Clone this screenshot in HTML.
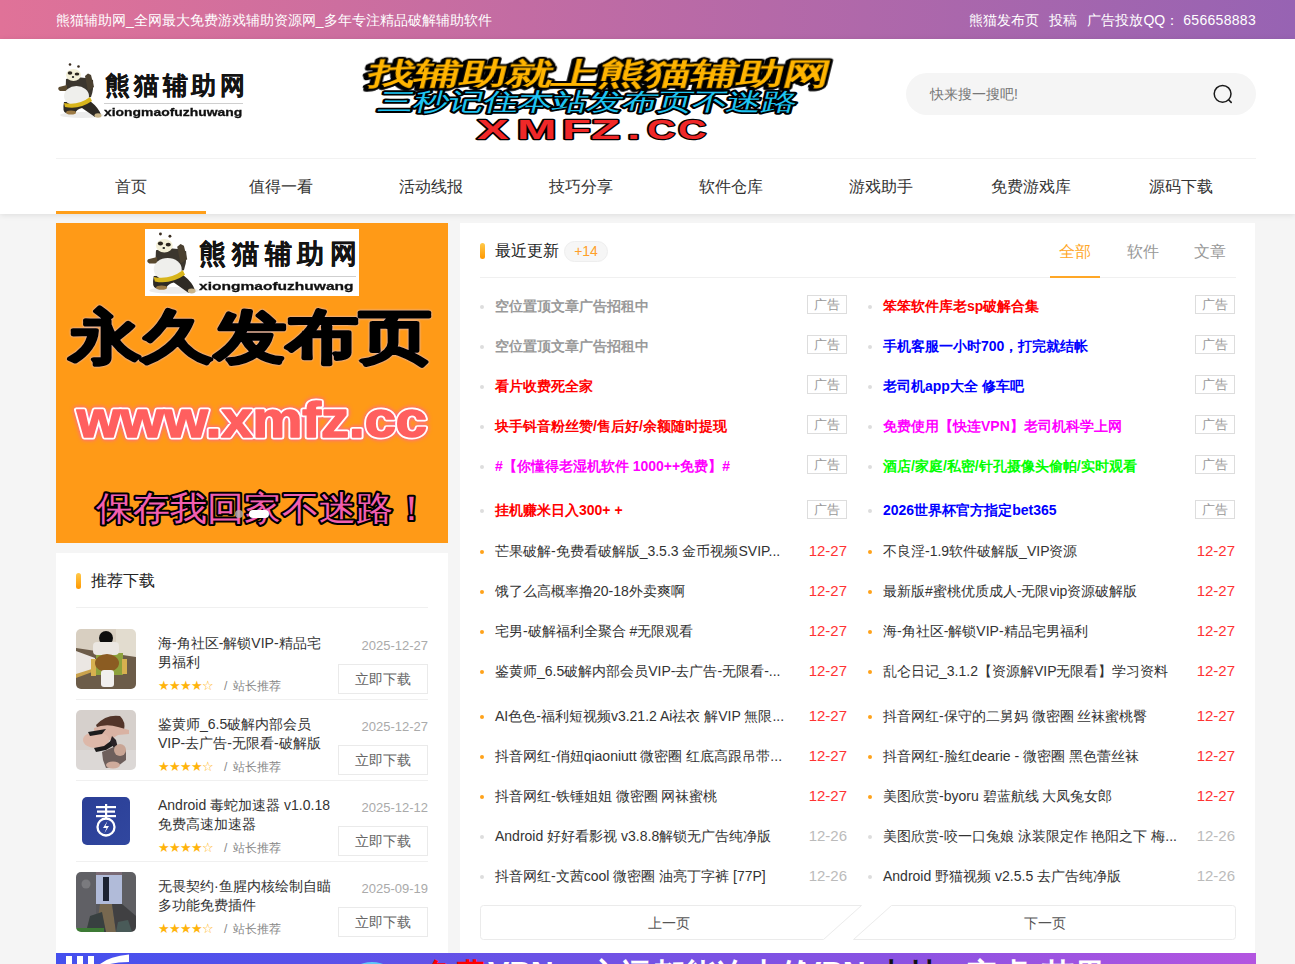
<!DOCTYPE html>
<html><head><meta charset="utf-8">
<style>
*{margin:0;padding:0;box-sizing:border-box}
html,body{width:1295px;height:964px;overflow:hidden}
body{background:#f5f5f5;font-family:"Liberation Sans",sans-serif;color:#333;position:relative}
.abs{position:absolute}
.topbar{position:absolute;left:0;top:0;width:1295px;height:39px;background:linear-gradient(90deg,#e07298,#9763b3);color:#fff;font-size:14px}
.topbar .l{position:absolute;left:56px;top:11px;line-height:18px;white-space:nowrap}
.topbar .r{position:absolute;right:39px;top:11px;line-height:18px;white-space:nowrap}
.header{position:absolute;left:0;top:39px;width:1295px;height:175px;background:#fff;box-shadow:0 1px 6px rgba(0,0,0,.10)}
.search{position:absolute;left:906px;top:73px;width:350px;height:42px;border-radius:21px;background:#f5f5f5}
.search span{position:absolute;left:24px;top:12px;font-size:14px;line-height:18px;color:#777}
.navline{position:absolute;left:56px;top:158px;width:1200px;height:1px;background:#f2f2f2}
.nav{position:absolute;left:56px;top:159px;width:1200px;height:55px}
.nav a{position:absolute;top:0;width:150px;height:55px;line-height:55px;text-align:center;font-size:16px;color:#333;text-decoration:none}
.nav .on{border-bottom:0}
.navbar{position:absolute;left:56px;top:211px;width:150px;height:3px;background:#ff9f1a}
.slide{position:absolute;left:56px;top:223px;width:392px;height:320px;background:#ff9a17;overflow:hidden}
.card{position:absolute;background:#fff}

.bar{position:absolute;width:5px;height:16px;border-radius:3px;background:linear-gradient(#ffc94a,#ff9800)}
.ttl{position:absolute;font-size:16px;line-height:20px;color:#222;white-space:nowrap}
.sep{position:absolute;height:1px;background:#f0f0f0}
.thumb{position:absolute;left:76px;width:60px;height:60px;border-radius:5px;overflow:hidden}

.it-t{position:absolute;left:158px;font-size:14px;line-height:19px;color:#333;white-space:nowrap}
.it-s{position:absolute;left:158px;font-size:13px;line-height:14px;color:#ffb40a;white-space:nowrap;letter-spacing:-1.1px}
.it-r{position:absolute;left:224px;font-size:12px;line-height:14px;color:#888;white-space:nowrap}
.it-d{position:absolute;right:867px;font-size:13px;line-height:14px;color:#aaa;white-space:nowrap}
.btn{position:absolute;left:338px;width:90px;height:30px;border:1px solid #eaeaea;text-align:center;line-height:28px;font-size:14px;color:#666}

.badge{position:absolute;left:564px;top:241px;width:44px;height:21px;border-radius:11px;background:#f6f6f6;border:1px solid #eee;text-align:center;font-size:14px;line-height:19px;color:#ff9f2a}
.tab{position:absolute;top:242px;font-size:16px;line-height:20px;color:#999;white-space:nowrap}
.row{position:absolute;height:20px;width:368px}
.row i{position:absolute;left:0;top:8px;width:4px;height:4px;border-radius:2px;background:#ddd}
.row i.o{background:#ffa21a}
.row b,.row span{position:absolute;left:15px;top:-1px;font-size:14px;line-height:20px;white-space:nowrap}
.row span{color:#333;font-weight:400}
.row em{position:absolute;right:1px;top:-1.5px;width:40px;height:19px;border:1px solid #ddd;font-style:normal;font-size:13px;line-height:17px;text-align:center;color:#999}
.row u{position:absolute;right:1px;top:-1px;text-decoration:none;font-size:15px;line-height:20px;color:#f33}
.row u.g{color:#bbb}
.bt{top:4px;font-size:32px;line-height:36px;font-weight:700;color:#fff;white-space:nowrap}
.logotxt{font-weight:700;color:#1a1a1a;-webkit-text-stroke:0.2px #111;white-space:nowrap}
.logoen{font-size:13px;font-weight:700;color:#111;-webkit-text-stroke:0.35px #111;line-height:14px;letter-spacing:0px;white-space:nowrap;transform:scale(1.07,0.85);transform-origin:0 0}
</style></head><body>
<div class="topbar"><div class="l">熊猫辅助网_全网最大免费游戏辅助资源网_多年专注精品破解辅助软件</div>
<div class="r">熊猫发布页<span style="margin-left:10px">投稿</span><span style="margin-left:10px">广告投放QQ<span style="letter-spacing:4px">：</span><span style="letter-spacing:0.3px">656658883</span></span></div></div>
<div class="header"></div>
<div class="abs" style="left:52px;top:60px;width:54px;height:60px"><svg width="54" height="60" viewBox="0 0 54 60"><defs><filter id="tb" x="-5%" y="-5%" width="110%" height="110%"><feGaussianBlur stdDeviation="0.6"/></filter><symbol id="panda" viewBox="0 0 54 60">
<ellipse cx="30" cy="55" rx="22" ry="3" fill="#ececec"/>
<path d="M12 42 Q10 52 14 53 L23 53 Q25 49 30 48 L43 57 L49 55 Q47 48 38 41 Z" fill="#2e2a24"/>
<ellipse cx="19" cy="52.5" rx="5" ry="2" fill="#9c7a45"/>
<ellipse cx="46" cy="55.5" rx="3.5" ry="2.2" fill="#c9b58a"/>
<path d="M14 19 Q13 33 16 41 L39 37 Q42 29 41 20 Q28 15 14 19 Z" fill="#3b362e"/>
<path d="M15 25 L7 27 Q5 29 8 31 L15 31 Z" fill="#5a4a30"/>
<path d="M33 16 L36 13.5 L39 15 L42 27 L36 31 Z" fill="#4a4030"/>
<ellipse cx="24.5" cy="36" rx="12.5" ry="10" fill="#efefec"/>
<path d="M12 43 Q26 46 38 37 L40 41 Q27 50 13 47 Z" fill="#d8b51c"/>
<ellipse cx="21.5" cy="15" rx="7.5" ry="6" fill="#f3efd6"/>
<ellipse cx="18" cy="13" rx="2.3" ry="1.8" fill="#2a241c"/>
<ellipse cx="25" cy="14" rx="2.3" ry="1.6" fill="#2a241c"/>
<ellipse cx="21" cy="17" rx="1.2" ry="0.9" fill="#222"/>
<circle cx="18" cy="4.5" r="1.3" fill="#3a2d20"/><circle cx="26.5" cy="6.5" r="1.3" fill="#3a2d20"/>
</symbol></defs><use href="#panda"/></svg></div>
<div class="abs logotxt" style="left:105px;top:69px;font-size:25px;line-height:32px;letter-spacing:3.8px">熊猫辅助网</div>
<div class="abs" style="left:104px;top:103px;width:139px;height:1px;background:#cfcfcf"></div>
<div class="abs logoen" style="left:104px;top:107px">xiongmaofuzhuwang</div>
<svg class="abs" style="left:355px;top:50px" width="490" height="100" viewBox="0 0 490 100">
<g transform="skewX(-14)"><text x="20" y="33.5" font-size="30" font-weight="700" fill="#ffb400" stroke="#000" stroke-width="4" style="filter:drop-shadow(-1.5px 1.5px 0 #000)" paint-order="stroke" stroke-linejoin="round" textLength="461" lengthAdjust="spacingAndGlyphs" font-family="Liberation Sans">找辅助就上熊猫辅助网</text>
<text x="37" y="60" font-size="24" fill="#1ec4f2" stroke="#000" stroke-width="3.6" paint-order="stroke" stroke-linejoin="round" textLength="418" lengthAdjust="spacingAndGlyphs" font-family="Liberation Sans">三秒记住本站发布页不迷路</text></g>
<text transform="scale(1.75,1)" x="69.7 92.6 118.3 134.9 155.4" y="89" font-size="27" font-weight="700" fill="#f02828" stroke="#000" stroke-width="2.4" paint-order="stroke" stroke-linejoin="round" font-family="Liberation Sans">XMFZ.</text><text transform="scale(1.45,1)" x="201.4 222.8" y="89" font-size="27" font-weight="700" fill="#f02828" stroke="#000" stroke-width="2.4" paint-order="stroke" stroke-linejoin="round" font-family="Liberation Sans">CC</text>
</svg>

<div class="search"><span>快来搜一搜吧!</span>
<svg class="abs" style="left:306px;top:11px" width="22" height="22" viewBox="0 0 22 22"><circle cx="10.6" cy="9.8" r="8.4" fill="none" stroke="#1a1a1a" stroke-width="1.5"/><path d="M16.6 15.8L19.2 18.4" stroke="#1a1a1a" stroke-width="1.6" stroke-linecap="round"/></svg></div>
<div class="navline"></div>
<div class="nav">
<a style="left:0">首页</a><a style="left:150px">值得一看</a><a style="left:300px">活动线报</a><a style="left:450px">技巧分享</a><a style="left:600px">软件仓库</a><a style="left:750px">游戏助手</a><a style="left:900px">免费游戏库</a><a style="left:1050px">源码下载</a>
</div>
<div class="navbar"></div>
<div class="slide">
<div class="abs" style="left:89px;top:6px;width:214px;height:67px;background:#fff"></div>
<div class="abs" style="left:84px;top:6px;width:61px;height:67px"><svg width="61" height="67" viewBox="0 0 54 60"><use href="#panda"/></svg></div>
<div class="abs logotxt" style="left:143px;top:14px;font-size:27px;line-height:34px;letter-spacing:5.8px">熊猫辅助网</div>
<div class="abs" style="left:143px;top:53px;width:157px;height:1px;background:#cfcfcf"></div>
<div class="abs logoen" style="left:143px;top:57px;font-size:14px;transform:scale(1.11,0.8)">xiongmaofuzhuwang</div>
<svg class="abs" style="left:0;top:0" width="392" height="320" viewBox="0 0 392 320">
<text x="13" y="134" font-size="58" font-weight="700" fill="#000" stroke="#000" stroke-width="2.8" stroke-linejoin="round" textLength="362" lengthAdjust="spacingAndGlyphs" font-family="Liberation Sans" style="filter:drop-shadow(0 0 1px #d8c8ff)">永久发布页</text>
<text x="21" y="214" font-size="50" font-weight="700" fill="#fff" stroke="#fff" stroke-width="5" stroke-linejoin="round" textLength="350" lengthAdjust="spacingAndGlyphs" font-family="Liberation Sans" style="filter:drop-shadow(0 0 2px #ff50c0)">www.xmfz.cc</text><text x="21" y="214" font-size="50" font-weight="700" fill="#ff5f5f" stroke="#ff5f5f" stroke-width="1.6" stroke-linejoin="round" textLength="350" lengthAdjust="spacingAndGlyphs" font-family="Liberation Sans">www.xmfz.cc</text>
<text x="40" y="297" font-size="34" fill="#f25fb0" stroke="#000" stroke-width="4" paint-order="stroke" stroke-linejoin="round" textLength="334" lengthAdjust="spacingAndGlyphs" font-family="Liberation Sans">保存我回家不迷路！</text>
</svg>
<div class="abs" style="left:179px;top:287px;width:8px;height:8px;border-radius:4px;background:rgba(180,180,180,.8)"></div>
<div class="abs" style="left:193px;top:287px;width:20px;height:8px;border-radius:4px;background:#fff"></div>
</div>
<div class="card" style="left:56px;top:553px;width:392px;height:411px"></div>
<div class="card" style="left:460px;top:223px;width:795px;height:741px"></div>
<div class="bar" style="left:480px;top:243px"></div><div class="ttl" style="left:495px;top:241px">最近更新</div>
<div class="badge">+14</div>
<div class="tab" style="left:1059px;color:#ffa726">全部</div><div class="tab" style="left:1127px">软件</div><div class="tab" style="left:1194px">文章</div>
<div class="sep" style="left:480px;top:277px;width:756px"></div>
<div class="abs" style="left:1050px;top:276px;width:50px;height:2px;background:#ffa726"></div>
<div class="row" style="left:480px;top:296.5px"><i></i><b style="color:#999">空位置顶文章广告招租中</b><em>广告</em></div>
<div class="row" style="left:480px;top:336.5px"><i></i><b style="color:#999">空位置顶文章广告招租中</b><em>广告</em></div>
<div class="row" style="left:480px;top:376.5px"><i></i><b style="color:#f00">看片收费死全家</b><em>广告</em></div>
<div class="row" style="left:480px;top:416.5px"><i></i><b style="color:#f00">块手钭音粉丝赞/售后好/余额随时提现</b><em>广告</em></div>
<div class="row" style="left:480px;top:456.5px"><i></i><b style="color:#f0f">#【你懂得老湿机软件 1000++免费】#</b><em>广告</em></div>
<div class="row" style="left:480px;top:501.0px"><i></i><b style="color:#f00">挂机赚米日入300+ +</b><em>广告</em></div>
<div class="row" style="left:480px;top:541.5px"><i class="o"></i><span>芒果破解-免费看破解版_3.5.3 金币视频SVIP...</span><u class="">12-27</u></div>
<div class="row" style="left:480px;top:581.5px"><i class="o"></i><span>饿了么高概率撸20-18外卖爽啊</span><u class="">12-27</u></div>
<div class="row" style="left:480px;top:621.5px"><i class="o"></i><span>宅男-破解福利全聚合 #无限观看</span><u class="">12-27</u></div>
<div class="row" style="left:480px;top:661.5px"><i class="o"></i><span>鉴黄师_6.5破解内部会员VIP-去广告-无限看-...</span><u class="">12-27</u></div>
<div class="row" style="left:480px;top:706.5px"><i class="o"></i><span>AI色色-福利短视频v3.21.2 Ai祛衣 解VIP 無限...</span><u class="">12-27</u></div>
<div class="row" style="left:480px;top:746.5px"><i class="o"></i><span>抖音网红-俏妞qiaoniutt 微密圈 红底高跟吊带...</span><u class="">12-27</u></div>
<div class="row" style="left:480px;top:786.5px"><i class="o"></i><span>抖音网红-铁锤姐姐 微密圈 网袜蜜桃</span><u class="">12-27</u></div>
<div class="row" style="left:480px;top:826.5px"><i class=""></i><span>Android 好好看影视 v3.8.8解锁无广告纯净版</span><u class="g">12-26</u></div>
<div class="row" style="left:480px;top:866.5px"><i class=""></i><span>抖音网红-文茜cool 微密圈 油亮丁字裤 [77P]</span><u class="g">12-26</u></div>
<div class="row" style="left:868px;top:296.5px"><i></i><b style="color:#f00">笨笨软件库老sp破解合集</b><em>广告</em></div>
<div class="row" style="left:868px;top:336.5px"><i></i><b style="color:#00f">手机客服一小时700，打完就结帐</b><em>广告</em></div>
<div class="row" style="left:868px;top:376.5px"><i></i><b style="color:#00f">老司机app大全 修车吧</b><em>广告</em></div>
<div class="row" style="left:868px;top:416.5px"><i></i><b style="color:#f0f">免费使用【快连VPN】老司机科学上网</b><em>广告</em></div>
<div class="row" style="left:868px;top:456.5px"><i></i><b style="color:#0f0">酒店/家庭/私密/针孔摄像头偷帕/实时观看</b><em>广告</em></div>
<div class="row" style="left:868px;top:501.0px"><i></i><b style="color:#00f">2026世界杯官方指定bet365</b><em>广告</em></div>
<div class="row" style="left:868px;top:541.5px"><i class="o"></i><span>不良淫-1.9软件破解版_VIP资源</span><u class="">12-27</u></div>
<div class="row" style="left:868px;top:581.5px"><i class="o"></i><span>最新版#蜜桃优质成人-无限vip资源破解版</span><u class="">12-27</u></div>
<div class="row" style="left:868px;top:621.5px"><i class="o"></i><span>海-角社区-解锁VIP-精品宅男福利</span><u class="">12-27</u></div>
<div class="row" style="left:868px;top:661.5px"><i class="o"></i><span>乱仑日记_3.1.2【资源解VIP无限看】学习资料</span><u class="">12-27</u></div>
<div class="row" style="left:868px;top:706.5px"><i class="o"></i><span>抖音网红-保守的二舅妈 微密圈 丝袜蜜桃臀</span><u class="">12-27</u></div>
<div class="row" style="left:868px;top:746.5px"><i class="o"></i><span>抖音网红-脸红dearie - 微密圈 黑色蕾丝袜</span><u class="">12-27</u></div>
<div class="row" style="left:868px;top:786.5px"><i class="o"></i><span>美图欣赏-byoru 碧蓝航线 大凤兔女郎</span><u class="">12-27</u></div>
<div class="row" style="left:868px;top:826.5px"><i class=""></i><span>美图欣赏-咬一口兔娘 泳装限定作 艳阳之下 梅...</span><u class="g">12-26</u></div>
<div class="row" style="left:868px;top:866.5px"><i class=""></i><span>Android 野猫视频 v2.5.5 去广告纯净版</span><u class="g">12-26</u></div>
<svg class="abs" style="left:479px;top:904px" width="758" height="37" viewBox="0 0 758 37">
<path d="M4.5 1.5 L382.5 1.5 L344.5 35.5 L4.5 35.5 Q1.5 35.5 1.5 32.5 L1.5 4.5 Q1.5 1.5 4.5 1.5 Z" fill="#fff" stroke="#ebebeb" stroke-width="1"/>
<path d="M412.5 1.5 L753.5 1.5 Q756.5 1.5 756.5 4.5 L756.5 32.5 Q756.5 35.5 753.5 35.5 L374.5 35.5 Z" fill="#fff" stroke="#ebebeb" stroke-width="1"/>
</svg>
<div class="abs" style="left:648px;top:913px;font-size:14px;line-height:20px;color:#555">上一页</div>
<div class="abs" style="left:1024px;top:913px;font-size:14px;line-height:20px;color:#555">下一页</div>
<div class="bar" style="left:76px;top:573px"></div><div class="ttl" style="left:91px;top:571px">推荐下载</div>
<div class="sep" style="left:76px;top:607px;width:352px"></div>
<div class="thumb" style="top:629px"><svg width="60" height="60" viewBox="0 0 60 60"><g filter="url(#tb)"><rect width="60" height="60" fill="#d8cfc1"/><rect x="40" width="20" height="30" fill="#e2dccf"/>
<path d="M0 19 L60 28 L60 60 L0 60 Z" fill="#6c5b49"/><path d="M0 22 L19 29 L19 41 L2 47 L0 47 Z" fill="#ebe7e3"/><path d="M0 45 L19 39 L19 42 L0 49 Z" fill="#c9a24e"/>
<rect x="20" y="24" width="27" height="22" fill="#8ea23e"/><rect x="15" y="30" width="5" height="17" fill="#d7b04f"/><rect x="46" y="30" width="5" height="15" fill="#d7b04f"/>
<ellipse cx="30" cy="9" rx="7" ry="7" fill="#111"/><rect x="17" y="13" width="26" height="13" rx="4" fill="#ebe7e2"/>
<ellipse cx="31" cy="34" rx="12" ry="9" fill="#8b5b22"/><rect x="25" y="41" width="13" height="17" rx="3" fill="#f1efee"/></g></svg></div>
<div class="it-t" style="top:634px">海-角社区-解锁VIP-精品宅<br>男福利</div>
<div class="it-s" style="top:679px">★★★★☆</div><div class="it-r" style="top:679px">/<span style="position:absolute;left:9px;top:0">站长推荐</span></div>
<div class="it-d" style="top:639px">2025-12-27</div>
<div class="btn" style="top:664px">立即下载</div>
<div class="sep" style="left:76px;top:699px;width:352px"></div>
<div class="thumb" style="top:710px"><svg width="60" height="60" viewBox="0 0 60 60"><g filter="url(#tb)"><rect width="60" height="60" fill="#d6d0cc"/><rect y="40" width="60" height="20" fill="#dcd8d6"/>
<path d="M20 15 Q30 4 44 6 Q50 12 48 20 L40 22 L24 24 Z" fill="#53362a"/>
<path d="M18 18 Q30 13 42 17 L53 20 L53 24 L42 25 L34 30 L18 30 Z" fill="#d9b2a3"/>
<ellipse cx="20" cy="30" rx="13" ry="8" fill="#ddb8a9"/>
<path d="M12 22 L30 19 L26 24 L14 26 Z" fill="#1f1b1d"/>
<path d="M18 38 L28 36 L36 30 L40 34 L30 40 L20 42 Z" fill="#1f1b1d"/>
<path d="M36 26 L40 30 L42 38 L38 38 L34 32 Z" fill="#2a2426"/>
<path d="M26 42 L40 36 L50 40 L50 50 L42 56 L30 58 L27 50 Z" fill="#6e5f5c"/>
<ellipse cx="44" cy="40" rx="6" ry="6" fill="#c9a595"/><ellipse cx="37" cy="55" rx="7" ry="3.5" fill="#cfab9c"/></g></svg></div>
<div class="it-t" style="top:715px">鉴黄师_6.5破解内部会员<br>VIP-去广告-无限看-破解版</div>
<div class="it-s" style="top:760px">★★★★☆</div><div class="it-r" style="top:760px">/<span style="position:absolute;left:9px;top:0">站长推荐</span></div>
<div class="it-d" style="top:720px">2025-12-27</div>
<div class="btn" style="top:745px">立即下载</div>
<div class="sep" style="left:76px;top:780px;width:352px"></div>
<div class="thumb" style="top:791px"><svg width="60" height="60" viewBox="0 0 60 60"><rect width="60" height="60" fill="#fff"/><defs><linearGradient id="bl" x1="0" y1="0" x2="1" y2="1"><stop offset="0" stop-color="#2a3e96"/><stop offset="1" stop-color="#31479f"/></linearGradient></defs>
<rect x="6" y="6" width="48" height="48" rx="5" fill="url(#bl)"/><rect x="20" y="15" width="20" height="2.2" fill="#fff"/><rect x="21" y="19.5" width="18" height="2.2" fill="#fff"/><rect x="20" y="24" width="20" height="2.2" fill="#fff"/><rect x="29" y="13" width="2.2" height="14" fill="#fff"/>
<circle cx="30" cy="36" r="8.5" fill="none" stroke="#fff" stroke-width="2.3"/><path d="M31.5 30 L27 37 L30.5 37 L28.5 42 L33 35 L29.5 35 Z" fill="#fff"/></svg></div>
<div class="it-t" style="top:796px">Android 毒蛇加速器 v1.0.18<br>免费高速加速器</div>
<div class="it-s" style="top:841px">★★★★☆</div><div class="it-r" style="top:841px">/<span style="position:absolute;left:9px;top:0">站长推荐</span></div>
<div class="it-d" style="top:801px">2025-12-12</div>
<div class="btn" style="top:826px">立即下载</div>
<div class="sep" style="left:76px;top:861px;width:352px"></div>
<div class="thumb" style="top:872px"><svg width="60" height="60" viewBox="0 0 60 60"><g filter="url(#tb)"><rect width="60" height="60" fill="#58585c"/><rect x="0" y="0" width="20" height="60" fill="#616165"/><rect x="46" y="0" width="14" height="60" fill="#5e5f63"/>
<rect x="20" y="3" width="26" height="29" fill="#b1bbd9"/><rect x="27" y="5" width="6" height="24" fill="#1b2232"/><rect x="20" y="0" width="26" height="3" fill="#7a6a74"/>
<path d="M24 32 L36 32 L40 60 L20 60 Z" fill="#776750"/><path d="M36 32 L46 32 L60 44 L60 60 L40 60 Z" fill="#3f4043"/>
<path d="M14 44 L26 40 L30 60 L10 60 Z" fill="#38403f"/><path d="M42 50 L52 48 L56 60 L40 60 Z" fill="#4a5a58"/><rect x="0" y="56" width="28" height="4" fill="#3e7a34"/>
<circle cx="10" cy="12" r="4.5" fill="#7a7a7e"/></g></svg></div>
<div class="it-t" style="top:877px">无畏契约·鱼腥内核绘制自瞄<br>多功能免费插件</div>
<div class="it-s" style="top:922px">★★★★☆</div><div class="it-r" style="top:922px">/<span style="position:absolute;left:9px;top:0">站长推荐</span></div>
<div class="it-d" style="top:882px">2025-09-19</div>
<div class="btn" style="top:907px">立即下载</div>

<div class="abs" style="left:56px;top:953px;width:1200px;height:40px;background:linear-gradient(90deg,#4550ee 0%,#6a52e6 40%,#8a52e2 70%,#b355e0 100%);overflow:hidden">
<div class="abs" style="left:10px;top:3px;width:6px;height:30px;background:#fff"></div><div class="abs" style="left:21px;top:3px;width:6px;height:30px;background:#fff"></div><div class="abs" style="left:32px;top:3px;width:6px;height:30px;background:#fff"></div>
<svg class="abs" style="left:40px;top:0" width="40" height="11" viewBox="0 0 40 11"><path d="M4 11 Q14 3 33 1.5 L33 9 Q22 9 14 11 Z" fill="#fff"/></svg>
<div class="abs" style="left:293px;top:9px;width:46px;height:30px;border-radius:50%;background:#5fc8f8"></div>
<div class="abs bt" style="left:367px;color:#f00">免费</div>
<div class="abs bt" style="left:432px;top:2px">VPN</div>
<div class="abs bt" style="left:532px">永远都能连上的</div><div class="abs bt" style="left:744px;top:2px">VPN</div>
<div class="abs bt" style="left:820px;color:#111">支持</div>
<div class="abs bt" style="left:910px">安卓</div>
<div class="abs bt" style="left:986px">苹果</div>
</div>
</body></html>
